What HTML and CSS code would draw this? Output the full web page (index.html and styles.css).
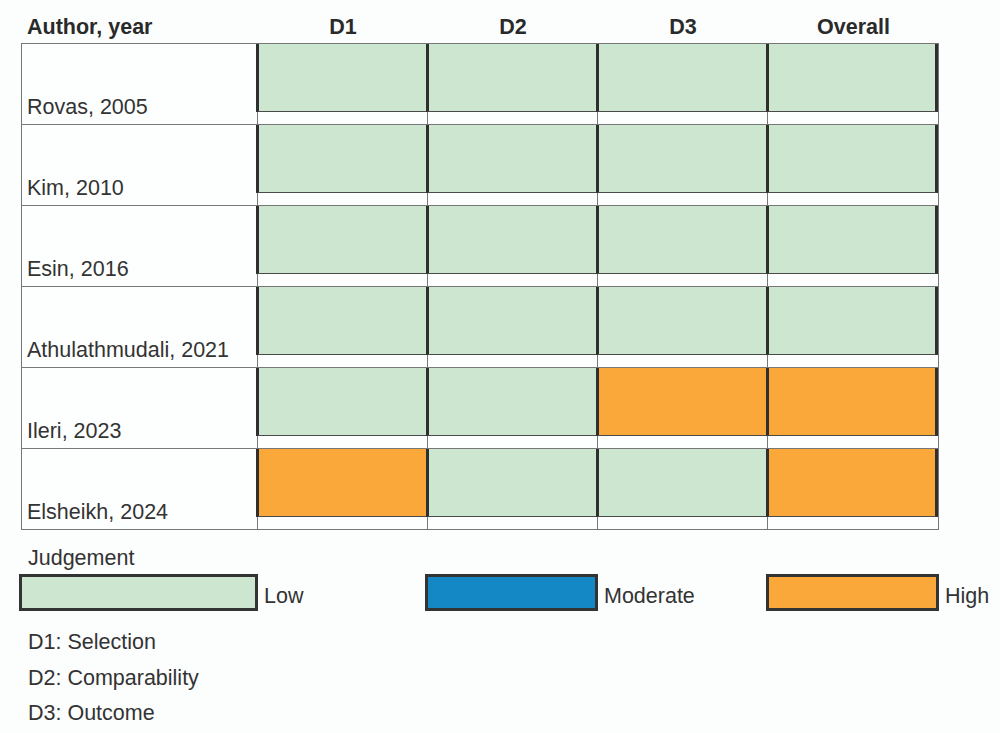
FILE: index.html
```html
<!DOCTYPE html>
<html lang="en">
<head>
<meta charset="utf-8">
<title>Risk of bias</title>
<link rel="stylesheet" href="styles.css">
</head>
<body>
<div class="chart">
  <div class="head">
    <div class="hcell first">Author, year</div>
    <div class="hcell">D1</div>
    <div class="hcell">D2</div>
    <div class="hcell">D3</div>
    <div class="hcell">Overall</div>
  </div>
  <div class="table">
    <div class="row">
      <div class="cell label">Rovas, 2005</div>
      <div class="cell"><div class="box low"></div></div>
      <div class="cell"><div class="box low"></div></div>
      <div class="cell"><div class="box low"></div></div>
      <div class="cell"><div class="box low last"></div></div>
    </div>
    <div class="row">
      <div class="cell label">Kim, 2010</div>
      <div class="cell"><div class="box low"></div></div>
      <div class="cell"><div class="box low"></div></div>
      <div class="cell"><div class="box low"></div></div>
      <div class="cell"><div class="box low last"></div></div>
    </div>
    <div class="row">
      <div class="cell label">Esin, 2016</div>
      <div class="cell"><div class="box low"></div></div>
      <div class="cell"><div class="box low"></div></div>
      <div class="cell"><div class="box low"></div></div>
      <div class="cell"><div class="box low last"></div></div>
    </div>
    <div class="row">
      <div class="cell label">Athulathmudali, 2021</div>
      <div class="cell"><div class="box low"></div></div>
      <div class="cell"><div class="box low"></div></div>
      <div class="cell"><div class="box low"></div></div>
      <div class="cell"><div class="box low last"></div></div>
    </div>
    <div class="row">
      <div class="cell label">Ileri, 2023</div>
      <div class="cell"><div class="box low"></div></div>
      <div class="cell"><div class="box low"></div></div>
      <div class="cell"><div class="box high"></div></div>
      <div class="cell"><div class="box high last"></div></div>
    </div>
    <div class="row">
      <div class="cell label">Elsheikh, 2024</div>
      <div class="cell"><div class="box high"></div></div>
      <div class="cell"><div class="box low"></div></div>
      <div class="cell"><div class="box low"></div></div>
      <div class="cell"><div class="box high last"></div></div>
    </div>
  </div>

  <div class="legend-title">Judgement</div>
  <div class="legend">
    <div class="item item-low"><div class="swatch low"></div><span class="ltext">Low</span></div>
    <div class="item item-mod"><div class="swatch moderate"></div><span class="ltext">Moderate</span></div>
    <div class="item item-high"><div class="swatch high"></div><span class="ltext">High</span></div>
  </div>

  <div class="notes">
    <div>D1: Selection</div>
    <div>D2: Comparability</div>
    <div>D3: Outcome</div>
  </div>
</div>
</body>
</html>
```

FILE: styles.css
```css
html, body {
  margin: 0;
  padding: 0;
  background: #fcfdfd;
}

body {
  font-family: "Liberation Sans", Arial, sans-serif;
  font-size: 21.5px;
  line-height: 24px;
  color: #333333;
  width: 1000px;
  height: 733px;
  overflow: hidden;
}

.chart {
  padding-left: 21px;
}

.head {
  display: grid;
  grid-template-columns: 237px 170px 170px 170px 171px;
  height: 43px;
  box-sizing: border-box;
  padding-top: 15px;
  font-weight: bold;
  color: #2a2a2a;
}

.hcell {
  text-align: center;
}

.hcell.first {
  text-align: left;
  padding-left: 6px;
}

.table {
  width: 918px;
  box-sizing: border-box;
  border-left: 1px solid #777777;
  border-top: 1px solid #777777;
}

.row {
  display: grid;
  grid-template-columns: 236px 170px 170px 170px 171px;
}

.cell {
  height: 81px;
  box-sizing: border-box;
  border-right: 1px solid #777777;
  border-bottom: 1px solid #777777;
  background: #fdfefe;
}

.cell.label {
  display: flex;
  align-items: flex-end;
  padding-left: 5px;
  padding-bottom: 5px;
}

.box {
  height: 68px;
  box-sizing: border-box;
  margin-left: -2px;
  border-left: 3px solid #2f2f2f;
  border-bottom: 1px solid #4a4a4a;
}

.box.last {
  border-right: 3px solid #2f2f2f;
}

.low {
  background: #cde6d0;
}

.high {
  background: #f9a839;
}

.moderate {
  background: #1487c5;
}

.legend-title {
  margin-top: 16px;
  padding-left: 7px;
}

.legend {
  display: flex;
  margin-top: 4px;
  margin-left: -2px;
  height: 37px;
}

.item {
  display: flex;
  gap: 6px;
}

.item-low {
  width: 406px;
}

.item-mod {
  width: 341px;
}

.swatch {
  height: 37px;
  box-sizing: border-box;
  border: 3px solid #333333;
}

.item-low .swatch {
  width: 239px;
}

.item-mod .swatch {
  width: 173px;
}

.item-high .swatch {
  width: 173px;
}

.ltext {
  align-self: flex-end;
  margin-bottom: 3px;
}

.notes {
  margin-top: 14px;
  padding-left: 7px;
  line-height: 35.5px;
}
```
